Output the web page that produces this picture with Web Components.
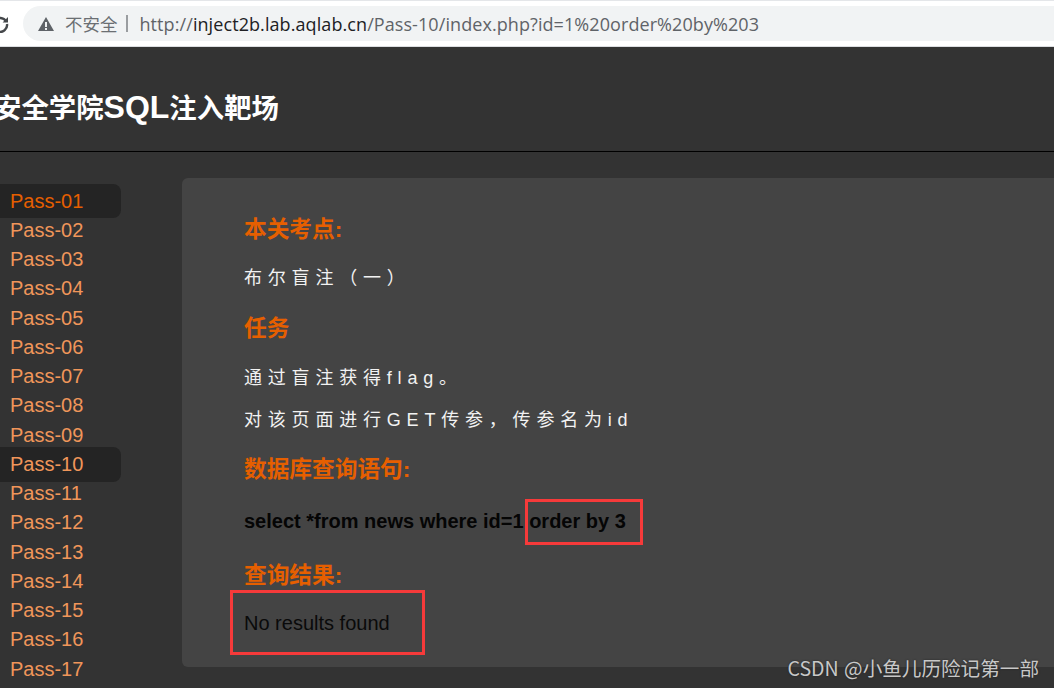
<!DOCTYPE html>
<html lang="zh">
<head>
<meta charset="utf-8">
<title>Pass-10</title>
<style>
    html, body {
        margin: 0;
        height: 688px;
        overflow: hidden;
        background: #333333;
    }
    body {
        position: relative;
        font-family: "Liberation Sans", "Noto Sans CJK SC", sans-serif;
    }
</style>
</head>
<body>
<browser-bar></browser-bar>
<site-header></site-header>
<page-main>
    <side-nav></side-nav>
    <lesson-card>
        <lesson-heading>本关考点:</lesson-heading>
        <lesson-text style="--gap: 23px">布尔盲注（一）</lesson-text>
        <lesson-heading style="--gap: 25px">任务</lesson-heading>
        <lesson-text style="--gap: 24px">通过盲注获得flag。</lesson-text>
        <lesson-text style="--gap: 17px">对该页面进行GET传参，传参名为id</lesson-text>
        <lesson-heading style="--gap: 24px">数据库查询语句:</lesson-heading>
        <lesson-query style="--gap: 26px">select *from news where id=1 <mark-box style="--inset: -10px -17px -11px -4px">order by 3</mark-box></lesson-query>
        <lesson-heading style="--gap: 29px">查询结果:</lesson-heading>
        <lesson-result style="--gap: 22px"><mark-box style="--inset: -21px -35px -19px -14px">No results found</mark-box></lesson-result>
    </lesson-card>
</page-main>
<water-mark>CSDN @小鱼儿历险记第一部</water-mark>

<script>
const FONT = '"Liberation Sans", "Noto Sans CJK SC", sans-serif';

class BrowserBar extends HTMLElement {
    constructor() {
        super();
        this.attachShadow({ mode: 'open' });
        this.shadowRoot.innerHTML = `
            <style>
                :host {
                    display: flex;
                    align-items: center;
                    height: 47px;
                    box-sizing: border-box;
                    background: #fff;
                    border-top: 1px solid #e4e6e9;
                    border-bottom: 1px solid #dcdee1;
                    overflow: hidden;
                }
                .reload {
                    flex: none;
                    width: 18px;
                    height: 18px;
                    margin-left: -9px;
                }
                .pill {
                    flex: 1;
                    display: flex;
                    align-items: center;
                    height: 35px;
                    margin: 0 -30px 0 14px;
                    padding-left: 15px;
                    background: #f1f3f4;
                    border-radius: 18px 0 0 18px;
                    font-family: "Open Sans", "Noto Sans CJK SC", sans-serif;
                    font-size: 18px;
                    color: #5f6368;
                    white-space: nowrap;
                }
                .warn {
                    flex: none;
                    width: 16px;
                    height: 14px;
                    margin-right: 11px;
                }
                .label { font-family: "Noto Sans CJK SC", sans-serif; font-size: 17.5px; color: #6b6f73; }
                .sep { width: 2px; height: 17px; margin: 0 12px 0 8px; background: #9a9da0; }
                .url { letter-spacing: 0.08px; }
                .host { color: #202124; }
            </style>
            <svg class="reload" viewBox="0 0 18 18">
                <path d="M15.2 6.6A7 7 0 1 0 16 9" fill="none" stroke="#45484b" stroke-width="2.4"/>
                <path d="M11.6 7.6 17 7.6 17 2z" fill="#45484b"/>
            </svg>
            <div class="pill">
                <svg class="warn" viewBox="0 0 16 14"><path d="M8 0 16 14H0z M7 5v5h2V5z M7 11v2h2v-2z" fill="#5f6368" fill-rule="evenodd"/></svg>
                <span class="label">不安全</span><span class="sep"></span>
                <span class="url">http://<span class="host">inject2b.lab.aqlab.cn</span>/Pass-10/index.php?id=1%20order%20by%203</span>
            </div>
        `;
    }
}

class SiteHeader extends HTMLElement {
    constructor() {
        super();
        this.attachShadow({ mode: 'open' });
        this.shadowRoot.innerHTML = `
            <style>
                :host {
                    display: flex;
                    align-items: center;
                    height: 105px;
                    box-sizing: border-box;
                    padding-top: 14px;
                    border-bottom: 1px solid #000;
                    background: #333;
                    overflow: hidden;
                }
                h1 {
                    margin: 0 0 0 -6px;
                    font: bold 27.4px ${FONT};
                    color: #fff;
                    white-space: nowrap;
                }
                .latin { font-size: 32px; }
            </style>
            <h1>安全学院<span class="latin">SQL</span>注入靶场</h1>
        `;
    }
}

class PageMain extends HTMLElement {
    constructor() {
        super();
        this.attachShadow({ mode: 'open' });
        this.shadowRoot.innerHTML = `
            <style>
                :host {
                    display: flex;
                    align-items: flex-start;
                    gap: 61px;
                    padding-top: 26px;
                }
            </style>
            <slot></slot>
        `;
    }
}

class SideNav extends HTMLElement {
    constructor() {
        super();
        this.attachShadow({ mode: 'open' });
        const current = [1, 10];
        let rows = '';
        for (let i = 1; i <= 17; i++) {
            const name = 'Pass-' + String(i).padStart(2, '0');
            const cls = current.includes(i) ? (i === 1 ? 'on first' : 'on') : '';
            rows += `<li class="${cls}">${name}</li>`;
        }
        this.shadowRoot.innerHTML = `
            <style>
                :host {
                    display: block;
                    flex: none;
                    width: 121px;
                    margin-top: 8.5px;
                }
                ul {
                    list-style: none;
                    margin: 0;
                    padding: 0;
                    display: grid;
                    grid-auto-rows: 29.25px;
                }
                li {
                    display: flex;
                    align-items: center;
                    padding-left: 10px;
                    font: 20px ${FONT};
                    color: #f0965a;
                    border-radius: 0 8px 8px 0;
                }
                li.on {
                    background: #242424;
                    margin: -2.5px 0;
                }
                li.first { color: #e65f00; }
            </style>
            <ul>${rows}</ul>
        `;
    }
}

class LessonCard extends HTMLElement {
    constructor() {
        super();
        this.attachShadow({ mode: 'open' });
        this.shadowRoot.innerHTML = `
            <style>
                :host {
                    display: block;
                    flex: 1;
                    height: 489px;
                    box-sizing: border-box;
                    padding: 39px 0 0 62px;
                    margin-right: -40px;
                    background: #444;
                    border-radius: 6px;
                }
            </style>
            <slot></slot>
        `;
    }
}

class LessonHeading extends HTMLElement {
    constructor() {
        super();
        this.attachShadow({ mode: 'open' });
        this.shadowRoot.innerHTML = `
            <style>
                :host {
                    display: block;
                    margin-top: var(--gap, 0);
                    padding-bottom: 2px;
                    font: bold 22.7px/24px ${FONT};
                    color: #e65f00;
                }
            </style>
            <slot></slot>
        `;
    }
}

class LessonText extends HTMLElement {
    constructor() {
        super();
        this.attachShadow({ mode: 'open' });
        this.shadowRoot.innerHTML = `
            <style>
                :host {
                    display: block;
                    margin-top: var(--gap, 0);
                    font: 18px/25px ${FONT};
                    letter-spacing: 5.8px;
                    color: #f2f2f2;
                    white-space: nowrap;
                }
            </style>
            <slot></slot>
        `;
    }
}

class LessonQuery extends HTMLElement {
    constructor() {
        super();
        this.attachShadow({ mode: 'open' });
        this.shadowRoot.innerHTML = `
            <style>
                :host {
                    display: block;
                    margin-top: var(--gap, 0);
                    font: bold 20px/25px ${FONT};
                    color: #050505;
                }
            </style>
            <slot></slot>
        `;
    }
}

class LessonResult extends HTMLElement {
    constructor() {
        super();
        this.attachShadow({ mode: 'open' });
        this.shadowRoot.innerHTML = `
            <style>
                :host {
                    display: block;
                    margin-top: var(--gap, 0);
                    font: 20px/25px ${FONT};
                    color: #0a0a0a;
                }
            </style>
            <slot></slot>
        `;
    }
}

// red box drawn over the screenshot, the text stays where it is
class MarkBox extends HTMLElement {
    constructor() {
        super();
        this.attachShadow({ mode: 'open' });
        this.shadowRoot.innerHTML = `
            <style>
                :host { display: inline-block; position: relative; }
                .box {
                    position: absolute;
                    inset: var(--inset);
                    box-sizing: border-box;
                    border: 3px solid #f63a3a;
                }
            </style>
            <slot></slot><span class="box"></span>
        `;
    }
}

class WaterMark extends HTMLElement {
    constructor() {
        super();
        this.attachShadow({ mode: 'open' });
        this.shadowRoot.innerHTML = `
            <style>
                :host {
                    position: absolute;
                    right: 15px;
                    bottom: 8px;
                    font: 19.6px/24px "Noto Sans CJK SC", ${FONT};
                    word-spacing: 1px;
                    color: #c8c8c8;
                    text-shadow: 0 0 2px #222;
                    white-space: nowrap;
                }
            </style>
            <slot></slot>
        `;
    }
}

customElements.define('browser-bar', BrowserBar);
customElements.define('site-header', SiteHeader);
customElements.define('page-main', PageMain);
customElements.define('side-nav', SideNav);
customElements.define('lesson-card', LessonCard);
customElements.define('lesson-heading', LessonHeading);
customElements.define('lesson-text', LessonText);
customElements.define('lesson-query', LessonQuery);
customElements.define('lesson-result', LessonResult);
customElements.define('mark-box', MarkBox);
customElements.define('water-mark', WaterMark);
</script>
</body>
</html>
